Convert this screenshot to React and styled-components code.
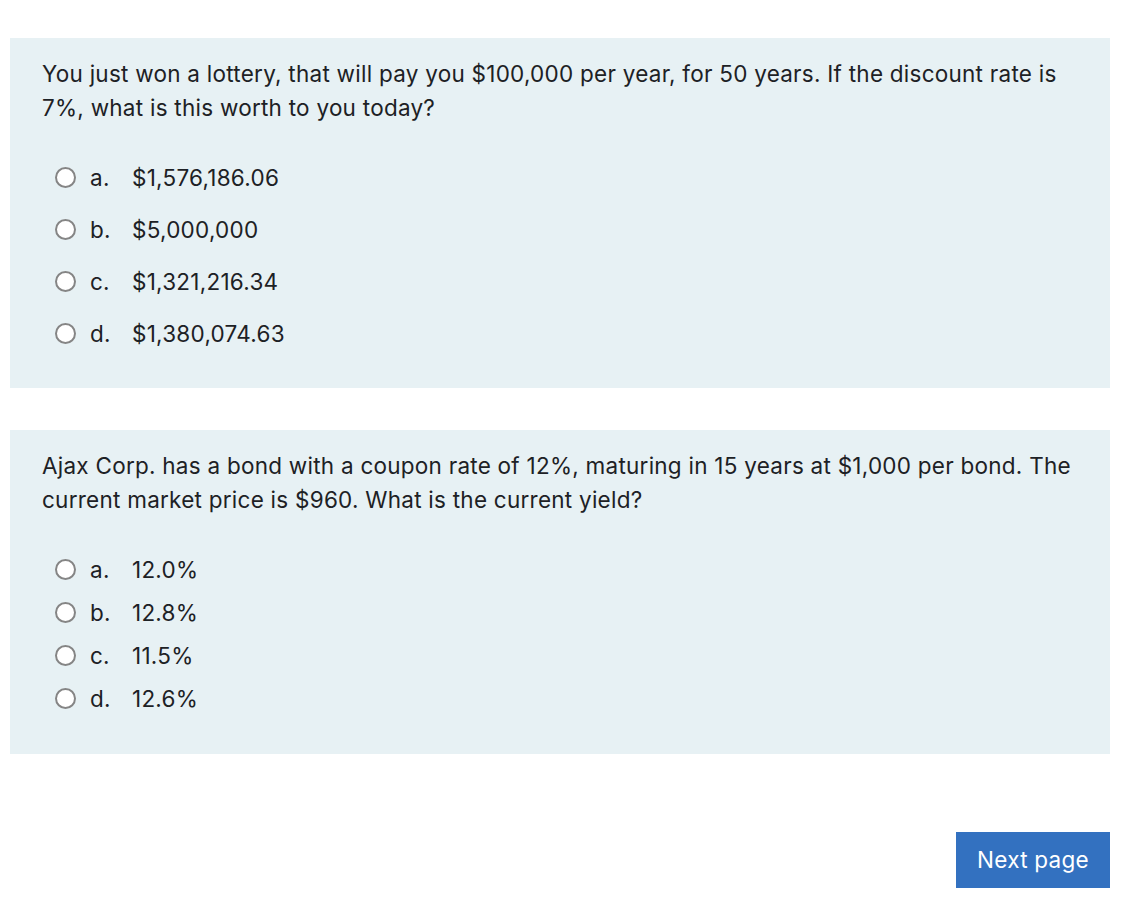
import React from "react";
import styled, { createGlobalStyle } from "styled-components";

const Global = createGlobalStyle`
  html, body { margin: 0; padding: 0; background: #ffffff; }
  body { font-family: Inter, "Noto Sans", "Liberation Sans", sans-serif; color: #1d2125; }
`;

const Page = styled.div`
  width: 1100px;
  padding: 38px 10px 22px 10px;
  display: flex;
  flex-direction: column;
  gap: 42px;
`;

const Panel = styled.div`
  background: #e7f1f4;
  padding: 19px 32px 38px 32px;
`;

const Question = styled.p`
  margin: 0 0 35px 0;
  font-size: 22.5px;
  letter-spacing: 0.25px;
  line-height: 34px;
`;

const Options = styled.div`
  display: flex;
  flex-direction: column;
  gap: ${(p) => p.$gap}px;
  padding-left: 13px;
`;

const Option = styled.label`
  display: flex;
  align-items: center;
  height: 34px;
  font-size: 22.5px;
  letter-spacing: 0.25px;
`;

const Radio = styled.span`
  box-sizing: border-box;
  width: 21px;
  height: 21px;
  border: 2px solid #858585;
  border-radius: 50%;
  background: #fff;
  flex: none;
  margin-right: 14px;
`;

const Letter = styled.span`
  width: 42px;
  flex: none;
`;

const Footer = styled.div`
  display: flex;
  justify-content: flex-end;
  margin-top: 36px;
`;

const Button = styled.button`
  background: #3371c0;
  color: #fff;
  border: none;
  width: 154px;
  height: 56px;
  font-family: Inter, "Noto Sans", "Liberation Sans", sans-serif;
  font-size: 22.5px;
  letter-spacing: 0.25px;
  padding: 0;
`;

const questions = [
  {
    text: "You just won a lottery, that will pay you $100,000 per year, for 50 years. If the discount rate is 7%, what is this worth to you today?",
    gap: 18,
    opts: ["$1,576,186.06", "$5,000,000", "$1,321,216.34", "$1,380,074.63"],
  },
  {
    text: "Ajax Corp. has a bond with a coupon rate of 12%, maturing in 15 years at $1,000 per bond. The current market price is $960. What is the current yield?",
    gap: 9.3,
    opts: ["12.0%", "12.8%", "11.5%", "12.6%"],
  },
];

const letters = ["a.", "b.", "c.", "d."];

export default function App() {
  return (
    <>
      <Global />
      <Page>
        {questions.map((q, i) => (
          <Panel key={i}>
            <Question>{q.text}</Question>
            <Options $gap={q.gap}>
              {q.opts.map((o, j) => (
                <Option key={j}>
                  <Radio />
                  <Letter>{letters[j]}</Letter>
                  <span>{o}</span>
                </Option>
              ))}
            </Options>
          </Panel>
        ))}
        <Footer>
          <Button>Next page</Button>
        </Footer>
      </Page>
    </>
  );
}
